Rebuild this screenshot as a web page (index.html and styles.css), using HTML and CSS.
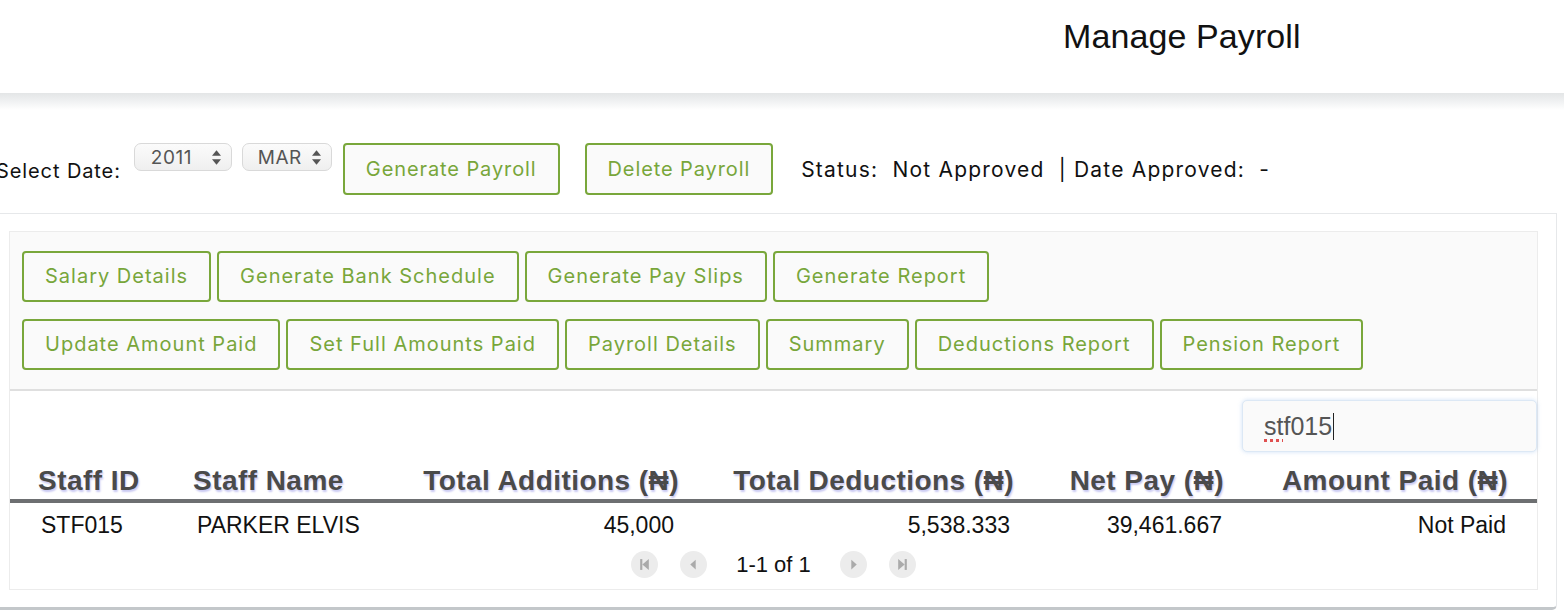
FILE: index.html
```html
<!DOCTYPE html>
<html lang="en">
<head>
<meta charset="utf-8">
<title>Manage Payroll</title>
<link rel="stylesheet" href="styles.css">
</head>
<body>
<header class="topbar">
  <h1 class="title">Manage Payroll</h1>
</header>
<div class="shade"></div>
<main class="page">
  <div class="controls">
    <span class="label">Select Date:</span>
    <div class="select select-year">
      <span class="select-text">2011</span>
      <svg class="arrows" width="9" height="15" viewBox="0 0 10 16"><path d="M5 0 L10 6 L0 6 Z" fill="#555"/><path d="M0 10 L10 10 L5 16 Z" fill="#555"/></svg>
    </div>
    <div class="select select-month">
      <span class="select-text">MAR</span>
      <svg class="arrows" width="9" height="15" viewBox="0 0 10 16"><path d="M5 0 L10 6 L0 6 Z" fill="#555"/><path d="M0 10 L10 10 L5 16 Z" fill="#555"/></svg>
    </div>
    <button class="btn btn-top btn-generate">Generate Payroll</button>
    <button class="btn btn-top btn-delete">Delete Payroll</button>
    <span class="status">Status:&nbsp; Not Approved &nbsp;| Date Approved:&nbsp; -</span>
  </div>

  <section class="card">
    <div class="inner">
      <div class="toolbar">
        <div class="btn-row">
          <button class="btn">Salary Details</button>
          <button class="btn">Generate Bank Schedule</button>
          <button class="btn">Generate Pay Slips</button>
          <button class="btn">Generate Report</button>
        </div>
        <div class="btn-row">
          <button class="btn">Update Amount Paid</button>
          <button class="btn">Set Full Amounts Paid</button>
          <button class="btn">Payroll Details</button>
          <button class="btn">Summary</button>
          <button class="btn">Deductions Report</button>
          <button class="btn">Pension Report</button>
        </div>
      </div>
      <div class="table-area">
        <div class="search-row">
          <div class="search"><span class="typo">st</span>f015<span class="caret"></span></div>
        </div>
        <table class="grid">
          <thead>
            <tr>
              <th class="c1">Staff ID</th>
              <th class="c2">Staff Name</th>
              <th class="c3">Total Additions (₦)</th>
              <th class="c4">Total Deductions (₦)</th>
              <th class="c5">Net Pay (₦)</th>
              <th class="c6">Amount Paid (₦)</th>
            </tr>
          </thead>
          <tbody>
            <tr>
              <td class="c1">STF015</td>
              <td class="c2">PARKER ELVIS</td>
              <td class="c3">45,000</td>
              <td class="c4">5,538.333</td>
              <td class="c5">39,461.667</td>
              <td class="c6">Not Paid</td>
            </tr>
          </tbody>
        </table>
        <div class="pager">
          <span class="pg-btn"><svg width="13" height="13" viewBox="0 0 12 12"><rect x="2" y="1" width="2" height="10" fill="#aaa"/><path d="M10 1 L10 11 L4 6 Z" fill="#aaa"/></svg></span>
          <span class="pg-btn"><svg width="13" height="13" viewBox="0 0 12 12"><path d="M8 1.5 L8 10.5 L3 6 Z" fill="#aaa"/></svg></span>
          <span class="pg-text">1-1 of 1</span>
          <span class="pg-btn"><svg width="13" height="13" viewBox="0 0 12 12"><path d="M4 1.5 L4 10.5 L9 6 Z" fill="#aaa"/></svg></span>
          <span class="pg-btn"><svg width="13" height="13" viewBox="0 0 12 12"><path d="M2 1 L2 11 L8 6 Z" fill="#aaa"/><rect x="8" y="1" width="2" height="10" fill="#aaa"/></svg></span>
        </div>
      </div>
    </div>
  </section>
</main>
</body>
</html>
```

FILE: styles.css
```css
html, body {
  margin: 0;
  padding: 0;
  background: #ffffff;
  overflow: hidden;
}

body {
  font-family: "Inter", "Liberation Sans", sans-serif;
  color: #111;
}

.topbar {
  height: 93px;
  background: #fff;
  padding-left: 1063px;
  box-sizing: border-box;
}

.title {
  margin: 0;
  padding-top: 15px;
  font-family: "Liberation Sans", Arial, sans-serif;
  font-weight: normal;
  font-size: 34px;
  line-height: 42px;
  color: #111;
  letter-spacing: 0.1px;
}

.shade {
  height: 17px;
  background: linear-gradient(#e3e5e6, #f3f4f5 60%, #ffffff);
}

.page {
  margin-left: -10px;
  width: 1567px;
}

.controls {
  display: flex;
  align-items: center;
  padding-top: 33px;
  height: 52px;
}

.label {
  font-size: 20px;
  letter-spacing: 0.9px;
  margin-left: 6px;
  margin-right: 13px;
  padding-top: 4px;
}

.select {
  align-self: flex-start;
  height: 28px;
  box-sizing: border-box;
  border: 1px solid #d9d9d9;
  border-radius: 7px;
  background: linear-gradient(#fbfbfb, #efefef);
  display: flex;
  align-items: center;
  color: #555;
  font-size: 19px;
  letter-spacing: 0.5px;
}

.select-year {
  width: 98px;
  padding-left: 16px;
  margin-right: 10px;
}

.select-month {
  width: 90px;
  padding-left: 15px;
  margin-right: 11px;
}

.select-text {
  flex: 1;
}

.arrows {
  margin-right: 10px;
}

.btn {
  font-family: "Inter", "Liberation Sans", sans-serif;
  font-size: 20px;
  letter-spacing: 1px;
  color: #78a63a;
  background: #fafafa;
  border: 2px solid #79a73b;
  border-radius: 4px;
  padding: 12px 21px;
  line-height: 23px;
  white-space: nowrap;
  cursor: pointer;
}

.btn-top {
  line-height: 24px;
  letter-spacing: 0.9px;
}

.btn-generate {
  margin-right: 25px;
}

.btn-delete {
  margin-right: 28px;
}

.status {
  font-size: 21px;
  color: #111;
  letter-spacing: 1.2px;
  white-space: pre;
}

.card {
  margin-top: 18px;
  width: 1567px;
  box-sizing: border-box;
  border: 1px solid #e6e8ea;
  border-bottom: 3px solid #c3c7ca;
  border-radius: 0 0 5px 5px;
  padding: 17px 18px 17px 18px;
}

.inner {
  border: 1px solid #ececec;
}

.toolbar {
  background: #fafafa;
  border-bottom: 2px solid #dfdfdf;
  padding: 19px 12px 19px 12px;
  display: flex;
  flex-direction: column;
  gap: 17px;
}

.btn-row {
  display: flex;
  gap: 6px;
}

.table-area {
  background: #fff;
  padding-bottom: 11px;
}

.search-row {
  display: flex;
  justify-content: flex-end;
  padding-top: 9px;
}

.search {
  width: 295px;
  height: 52px;
  box-sizing: border-box;
  background: #fafafa;
  border: 1px solid #dce8f5;
  border-radius: 5px;
  box-shadow: 0 0 4px rgba(120, 170, 230, 0.35);
  padding-left: 21px;
  display: flex;
  align-items: center;
  font-family: "Liberation Sans", Arial, sans-serif;
  font-size: 25px;
  color: #555;
}

.typo {
  text-decoration: underline dotted #e05050;
  text-decoration-thickness: 3px;
  text-underline-offset: 4px;
}

.caret {
  display: inline-block;
  width: 1px;
  height: 27px;
  background: #222;
  margin-left: 1px;
}

.grid {
  width: 100%;
  border-collapse: collapse;
  table-layout: fixed;
  font-family: "Liberation Sans", Arial, sans-serif;
}

.grid th,
.grid td {
  box-sizing: border-box;
  white-space: nowrap;
}

.grid th {
  font-size: 28px;
  font-weight: bold;
  letter-spacing: 0.45px;
  color: #4a4a4a;
  text-shadow: 1px 2px 2px #c8c8f2;
  line-height: 32px;
  padding-top: 13px;
  padding-bottom: 2px;
  border-bottom: 4px solid #6d6f71;
}

.grid td {
  font-size: 23px;
  color: #111;
  line-height: 32px;
  padding-top: 6px;
  padding-bottom: 2px;
}

.c1 { width: 155px; text-align: left; }
.c2 { width: 235px; text-align: left; }
.c3 { width: 300px; text-align: right; }
.c4 { width: 335px; text-align: right; }
.c5 { width: 210px; text-align: right; }
.c6 { text-align: right; }

th.c1 { padding-left: 28px; }
td.c1 { padding-left: 31px; }
th.c2 { padding-left: 28px; }
td.c2 { padding-left: 32px; }
th.c3 { padding-right: 21px; }
td.c3 { padding-right: 26px; }
th.c4 { padding-right: 21px; }
td.c4 { padding-right: 25px; }
th.c5 { padding-right: 21px; }
td.c5 { padding-right: 23px; }
th.c6 { padding-right: 29px; }
td.c6 { padding-right: 31px; }

.pager {
  display: flex;
  justify-content: center;
  align-items: center;
  margin-top: 8px;
  height: 27px;
  font-family: "Liberation Sans", Arial, sans-serif;
  font-size: 22px;
  color: #111;
}

.pg-btn {
  width: 27px;
  height: 27px;
  border-radius: 50%;
  background: #ececec;
  display: flex;
  align-items: center;
  justify-content: center;
  margin: 0 11px;
}

.pg-text {
  margin: 0 18px;
}
```
